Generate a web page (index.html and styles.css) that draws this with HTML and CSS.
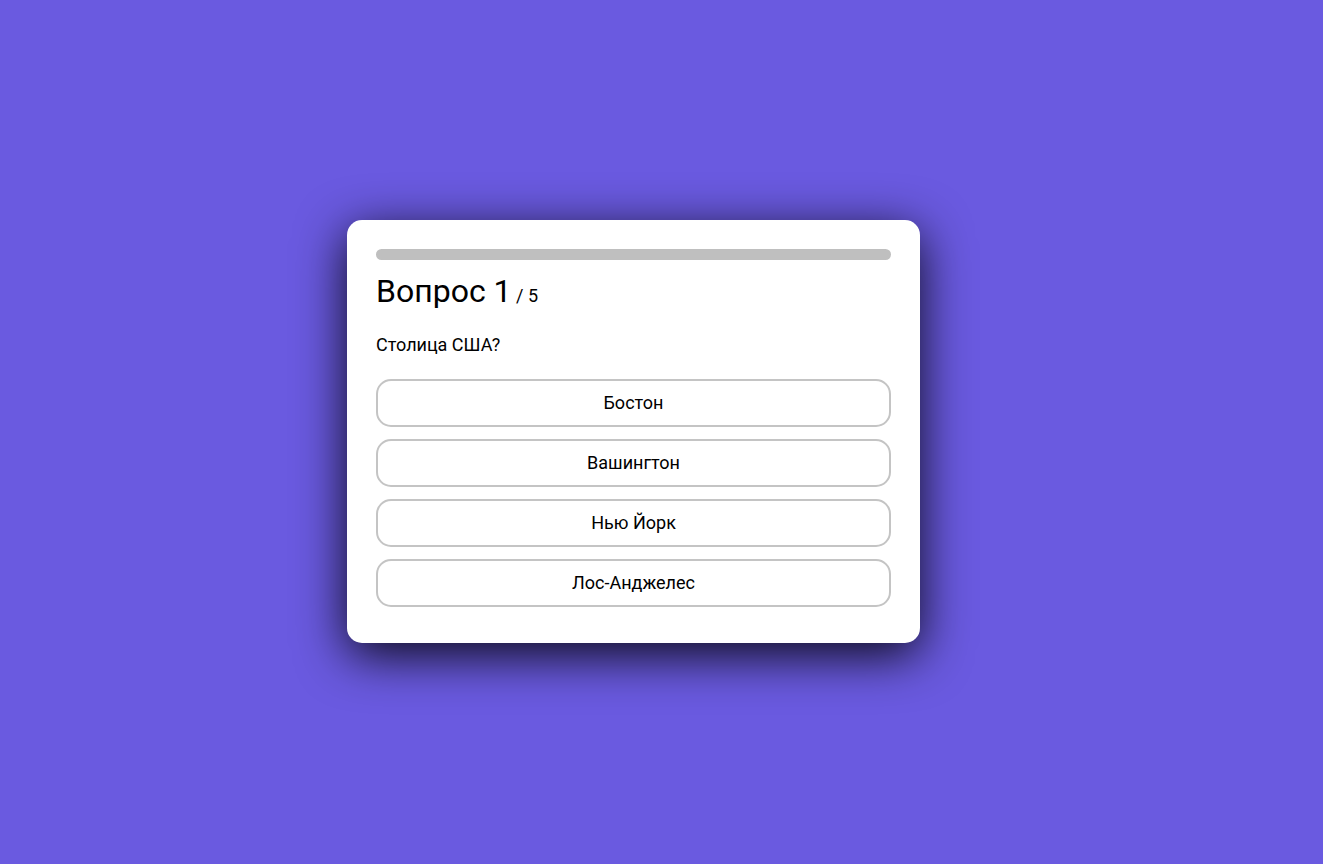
FILE: index.html
```html
<!DOCTYPE html>
<html lang="ru">
<head>
<meta charset="utf-8">
<title>Quiz</title>
<link rel="stylesheet" href="styles.css">
</head>
<body>
<main class="stage">
  <section class="card">
    <div class="progress"><div class="progress-fill"></div></div>
    <h1 class="title">Вопрос 1<span class="total"> / 5</span></h1>
    <p class="question">Столица США?</p>
    <div class="answers">
      <button class="answer">Бостон</button>
      <button class="answer">Вашингтон</button>
      <button class="answer">Нью Йорк</button>
      <button class="answer">Лос-Анджелес</button>
    </div>
  </section>
</main>
</body>
</html>
```
FILE: styles.css
```css
html, body {
  margin: 0;
  height: 100%;
}
body {
  background: #6a5ae0;
  font-family: Roboto, "Liberation Sans", sans-serif;
  color: #000;
}
.stage {
  height: 100%;
  display: flex;
  align-items: center;
  justify-content: center;
  padding: 0 56px 2px 0;
  box-sizing: border-box;
}
.card {
  width: 515px;
  background: #fff;
  border-radius: 15px;
  padding: 29px 29px 36px;
  box-shadow: 0 12px 50px rgba(0, 0, 0, 0.9);
}
.progress {
  height: 11px;
  border-radius: 6px;
  background: #bfbfbf;
}
.title {
  margin: 12px 0 0;
  font-weight: 400;
  font-size: 32px;
  line-height: 38px;
}
.total {
  font-size: 18px;
}
.question {
  margin: 19px 0 0;
  font-size: 18px;
  line-height: 21px;
}
.answers {
  margin-top: 24px;
  display: flex;
  flex-direction: column;
  gap: 12px;
}
.answer {
  height: 48px;
  border: 2px solid #c4c4c4;
  border-radius: 15px;
  background: #fff;
  font-family: inherit;
  font-size: 18px;
  color: #000;
  padding: 0;
}
```
